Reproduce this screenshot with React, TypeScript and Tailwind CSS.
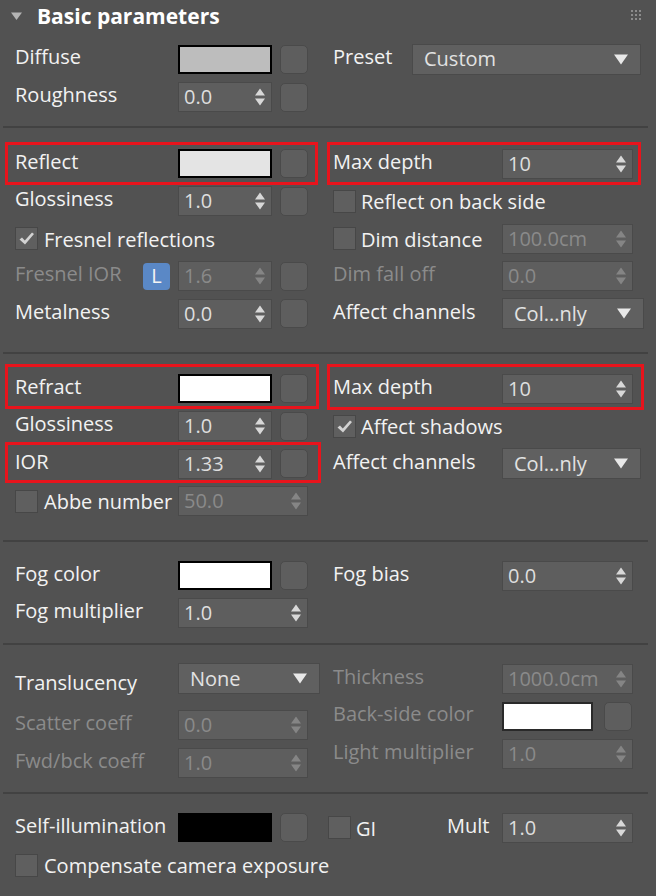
import React from "react";

const txt = "text-[20px] leading-none whitespace-nowrap";

function Label({ children, dim, w = "w-[163px]", flat }: { children: React.ReactNode; dim?: boolean; w?: string; flat?: boolean }) {
  return (
    <div className={`${w} shrink-0 ${flat ? "translate-y-[1px]" : "-translate-y-[2px]"} ${txt} ${dim ? "text-[#8b8b8b]" : "text-[#f2f2f2]"}`}>{children}</div>
  );
}

function SpinArrows({ dim }: { dim?: boolean }) {
  return (
    <svg width="12" height="20" viewBox="0 0 12 20" className="shrink-0">
      <path d="M1 8.5 L6 1.5 L11 8.5Z M1 11.5 L11 11.5 L6 18.5Z" fill={dim ? "#858585" : "#d8d8d8"} />
    </svg>
  );
}

function Spinner({ value, w = "w-[94px]", dim }: { value: string; w?: string; dim?: boolean }) {
  return (
    <div className={`flex h-[30px] ${w} shrink-0 items-center border border-[#4a4a4a] bg-[#5e5e5e] pl-[5px] pr-[5px]`}>
      <span className={`${txt} ${dim ? "text-[#8a8a8a]" : "text-[#dedede]"}`}>{value}</span>
      <div className="ml-auto">
        <SpinArrows dim={dim} />
      </div>
    </div>
  );
}

function Dropdown({ value, w, pl = "pl-[11px]" }: { value: string; w: string; pl?: string }) {
  return (
    <div className={`flex h-[31px] ${w} shrink-0 items-center border border-[#4a4a4a] bg-[#606060] ${pl} pr-[12px]`}>
      <span className={`${txt} text-[#e2e2e2]`}>{value}</span>
      <svg width="14" height="11" viewBox="0 0 14 11" className="ml-auto shrink-0">
        <path d="M0 0.5H14L7 10.5Z" fill="#e8e8e8" />
      </svg>
    </div>
  );
}

function Swatch({ color, w = "w-[94px]", border = "border-black" }: { color: string; w?: string; border?: string }) {
  return <div className={`h-[29px] ${w} shrink-0 border-2 ${border} ${color}`} />;
}

function MapBtn() {
  return <div className="h-[29px] w-[28px] shrink-0 rounded-[5px] border border-[#4a4a4a] bg-[#5e5e5e]" />;
}

function Check({ checked }: { checked?: boolean }) {
  return (
    <div className="flex h-[23px] w-[23px] shrink-0 items-center justify-center border border-[#474747] bg-[#5f5f5f]">
      {checked && (
        <svg width="17" height="17" viewBox="0 0 17 17">
          <path d="M1.5 9.5 L4 7.5 L6.8 10.5 L14 2.5 L16 4 L7 14.5 Z" fill="#d2d2d2" />
        </svg>
      )}
    </div>
  );
}

function Row({ children, h = "h-[37.5px]" }: { children: React.ReactNode; h?: string }) {
  return <div className={`flex ${h} items-center`}>{children}</div>;
}

function Lc({ children }: { children?: React.ReactNode }) {
  return <div className="relative flex h-full w-[326px] shrink-0 items-center pl-[15px]">{children}</div>;
}

function Rc({ children }: { children?: React.ReactNode }) {
  return <div className="relative flex h-full flex-1 items-center pl-[7px]">{children}</div>;
}

function Sep() {
  return <div className="ml-[3px] mr-[8px] h-[2px] bg-[#424242]" />;
}

function RedBox({ cls }: { cls: string }) {
  return <div className={`pointer-events-none absolute border-[3px] border-[#e8141c] ${cls}`} />;
}

export default function App() {
  return (
    <div className="h-[896px] w-[656px] overflow-hidden bg-[#525252] font-['Open_Sans',sans-serif] text-[#efefef]">
      {/* Header */}
      <div className="relative flex h-[40px] items-center pl-[11px] pb-[7px]">
        <svg width="12" height="9" viewBox="0 0 12 9" className="shrink-0">
          <path d="M0 0.5H11L5.5 8Z" fill="#b4b4b4" />
        </svg>
        <span className="ml-[14px] whitespace-nowrap text-[21px] font-bold leading-none text-white">Basic parameters</span>
        <div className="absolute left-[631px] top-[10px] grid grid-cols-3 gap-[2px]">
          {Array.from({ length: 9 }).map((_, i) => (
            <div key={i} className="h-[2px] w-[2px] bg-[#8c8c8c]" />
          ))}
        </div>
      </div>

      {/* Section 1 */}
      <div className="pb-[10px]">
        <Row h="h-[38px]">
          <Lc>
            <Label>Diffuse</Label>
            <Swatch color="bg-[#bdbdbd]" />
            <div className="ml-[8px]"><MapBtn /></div>
          </Lc>
          <Rc>
            <Label w="w-[79px]">Preset</Label>
            <Dropdown value="Custom" w="w-[229px]" />
          </Rc>
        </Row>
        <Row h="h-[38px]">
          <Lc>
            <Label>Roughness</Label>
            <Spinner value="0.0" />
            <div className="ml-[8px]"><MapBtn /></div>
          </Lc>
          <Rc />
        </Row>
      </div>
      <Sep />

      {/* Section 2: Reflection */}
      <div className="pt-[17px] pb-[19.5px]">
        <Row>
          <Lc>
            <RedBox cls="left-[5px] top-[-3px] h-[43px] w-[313px]" />
            <Label>Reflect</Label>
            <Swatch color="bg-[#e4e4e4]" />
            <div className="ml-[8px]"><MapBtn /></div>
          </Lc>
          <Rc>
            <RedBox cls="left-[1px] top-[-3px] h-[43px] w-[314px]" />
            <Label w="w-[169px]">Max depth</Label>
            <Spinner value="10" w="w-[131px]" />
          </Rc>
        </Row>
        <Row>
          <Lc>
            <Label>Glossiness</Label>
            <Spinner value="1.0" />
            <div className="ml-[8px]"><MapBtn /></div>
          </Lc>
          <Rc>
            <Check />
            <div className="ml-[5px]"><Label flat w="w-auto">Reflect on back side</Label></div>
          </Rc>
        </Row>
        <Row>
          <Lc>
            <Check checked />
            <div className="ml-[6px]"><Label flat w="w-auto">Fresnel reflections</Label></div>
          </Lc>
          <Rc>
            <Check />
            <div className="ml-[5px]"><Label flat w="w-[141px]">Dim distance</Label></div>
            <Spinner value="100.0cm" w="w-[131px]" dim />
          </Rc>
        </Row>
        <Row>
          <Lc>
            <Label dim w="w-[128px]">Fresnel IOR</Label>
            <div className="flex h-[27px] w-[27px] shrink-0 items-center justify-center rounded-[4px] bg-[#5a88c6]">
              <span className={`${txt} text-[#f4f4f4]`}>L</span>
            </div>
            <div className="ml-[8px]"><Spinner value="1.6" dim /></div>
            <div className="ml-[8px]"><MapBtn /></div>
          </Lc>
          <Rc>
            <Label dim w="w-[169px]">Dim fall off</Label>
            <Spinner value="0.0" w="w-[131px]" dim />
          </Rc>
        </Row>
        <Row>
          <Lc>
            <Label>Metalness</Label>
            <Spinner value="0.0" />
            <div className="ml-[8px]"><MapBtn /></div>
          </Lc>
          <Rc>
            <Label w="w-[169px]">Affect channels</Label>
            <Dropdown value="Col...nly" w="w-[142px]" />
          </Rc>
        </Row>
      </div>
      <Sep />

      {/* Section 3: Refraction */}
      <div className="pt-[16px] pb-[20px]">
        <Row>
          <Lc>
            <RedBox cls="left-[5px] top-[-6px] h-[45px] w-[314px]" />
            <Label>Refract</Label>
            <Swatch color="bg-white" />
            <div className="ml-[8px]"><MapBtn /></div>
          </Lc>
          <Rc>
            <RedBox cls="left-[1px] top-[-6px] h-[46px] w-[317px]" />
            <Label w="w-[169px]">Max depth</Label>
            <Spinner value="10" w="w-[131px]" />
          </Rc>
        </Row>
        <Row>
          <Lc>
            <Label>Glossiness</Label>
            <Spinner value="1.0" />
            <div className="ml-[8px]"><MapBtn /></div>
          </Lc>
          <Rc>
            <Check checked />
            <div className="ml-[5px]"><Label flat w="w-auto">Affect shadows</Label></div>
          </Rc>
        </Row>
        <Row>
          <Lc>
            <RedBox cls="left-[5px] top-[-3px] h-[41px] w-[316px]" />
            <Label>IOR</Label>
            <Spinner value="1.33" />
            <div className="ml-[8px]"><MapBtn /></div>
          </Lc>
          <Rc>
            <Label w="w-[169px]">Affect channels</Label>
            <Dropdown value="Col...nly" w="w-[139px]" />
          </Rc>
        </Row>
        <Row>
          <Lc>
            <Check />
            <div className="ml-[6px]"><Label flat w="w-[134px]">Abbe number</Label></div>
            <Spinner value="50.0" w="w-[130px]" dim />
          </Lc>
          <Rc />
        </Row>
      </div>
      <Sep />

      {/* Section 4: Fog */}
      <div className="pt-[15px] pb-[11px]">
        <Row>
          <Lc>
            <Label>Fog color</Label>
            <Swatch color="bg-white" />
            <div className="ml-[8px]"><MapBtn /></div>
          </Lc>
          <Rc>
            <Label w="w-[169px]">Fog bias</Label>
            <Spinner value="0.0" w="w-[131px]" />
          </Rc>
        </Row>
        <Row>
          <Lc>
            <Label>Fog multiplier</Label>
            <Spinner value="1.0" w="w-[130px]" />
          </Lc>
          <Rc />
        </Row>
      </div>
      <Sep />

      {/* Section 5: Translucency */}
      <div className="flex pt-[15px] pb-[10.5px]">
        <div className="flex w-[326px] shrink-0 flex-col">
          <Row>
            <Lc>
              <div className="w-[163px] shrink-0 translate-y-[5px]">
                <span className={`${txt} text-[#f2f2f2]`}>Translucency</span>
              </div>
              <Dropdown value="None" w="w-[142px]" />
            </Lc>
          </Row>
          <div className="mt-[9px]">
            <Row>
              <Lc>
                <Label dim>Scatter coeff</Label>
                <Spinner value="0.0" w="w-[130px]" dim />
              </Lc>
            </Row>
            <Row>
              <Lc>
                <Label dim>Fwd/bck coeff</Label>
                <Spinner value="1.0" w="w-[130px]" dim />
              </Lc>
            </Row>
          </div>
        </div>
        <div className="flex flex-1 flex-col">
          <Row>
            <Rc>
              <Label dim w="w-[169px]">Thickness</Label>
              <Spinner value="1000.0cm" w="w-[131px]" dim />
            </Rc>
          </Row>
          <Row>
            <Rc>
              <Label dim w="w-[169px]">Back-side color</Label>
              <Swatch color="bg-white" w="w-[91px]" border="border-[#2a2a2a]" />
              <div className="ml-[11px]"><MapBtn /></div>
            </Rc>
          </Row>
          <Row>
            <Rc>
              <Label dim w="w-[169px]">Light multiplier</Label>
              <Spinner value="1.0" w="w-[131px]" dim />
            </Rc>
          </Row>
        </div>
      </div>
      <Sep />

      {/* Section 6: Self-illumination */}
      <div className="pt-[15px]">
        <Row>
          <Lc>
            <Label>Self-illumination</Label>
            <Swatch color="bg-black" />
            <div className="ml-[8px]"><MapBtn /></div>
          </Lc>
          <div className="flex h-full flex-1 items-center pl-[2px]">
            <Check />
            <div className="ml-[5px]"><Label flat w="w-[91px]">GI</Label></div>
            <Label w="w-[55px]">Mult</Label>
            <Spinner value="1.0" w="w-[131px]" />
          </div>
        </Row>
        <Row>
          <Lc>
            <Check />
            <div className="ml-[6px]"><Label flat w="w-auto">Compensate camera exposure</Label></div>
          </Lc>
        </Row>
      </div>
    </div>
  );
}
